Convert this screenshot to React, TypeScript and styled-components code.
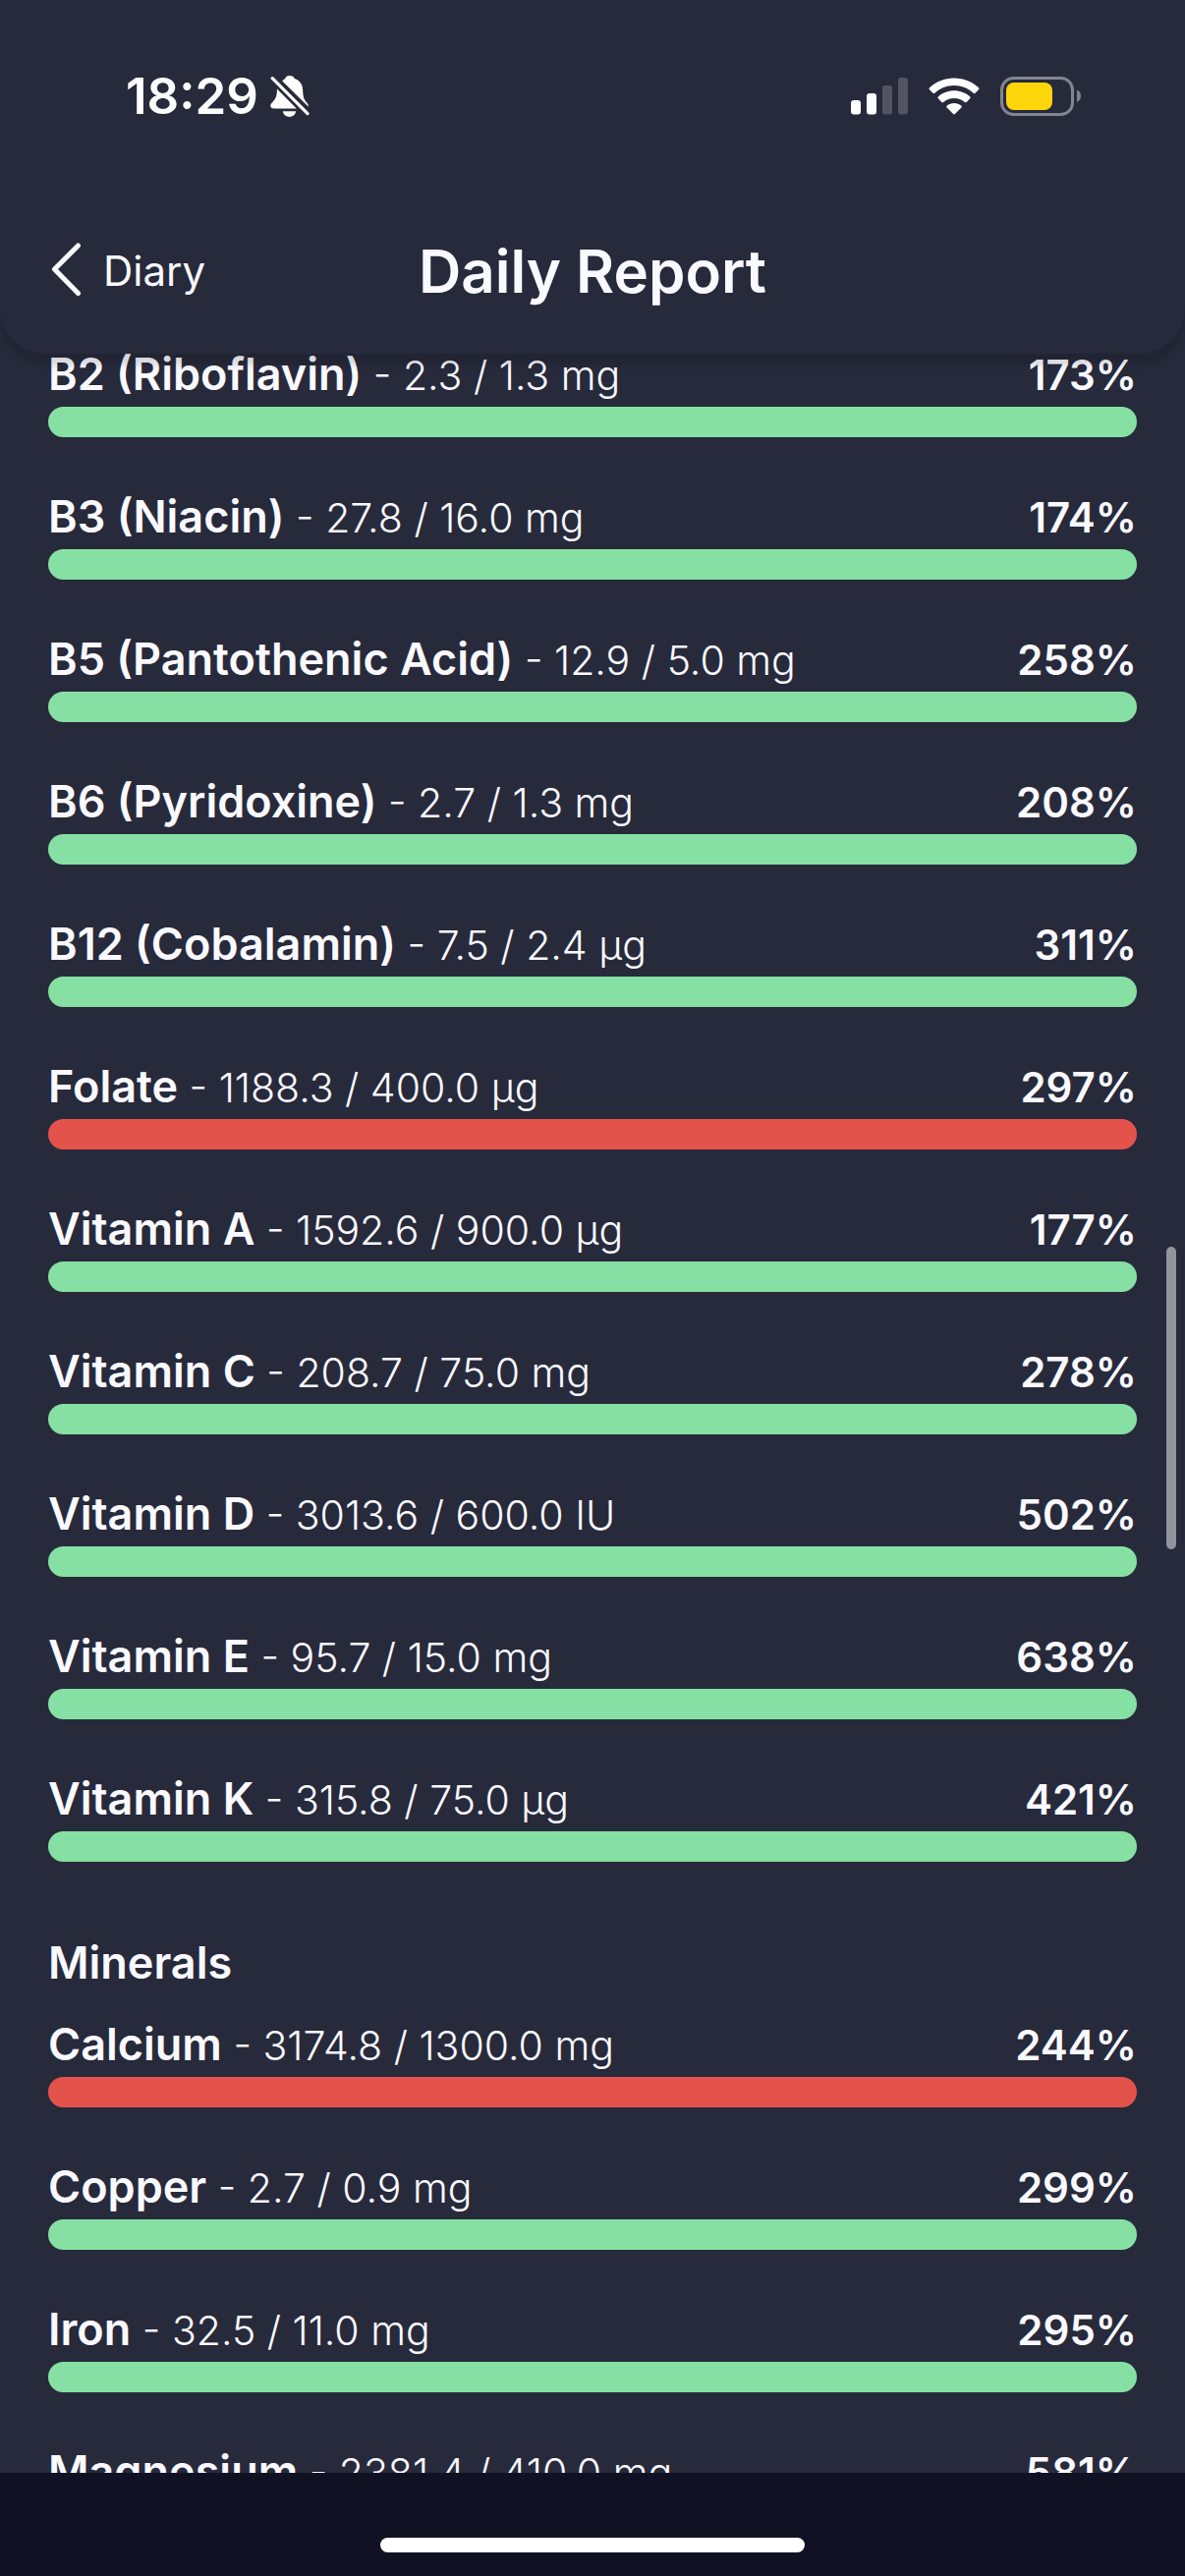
import React from "react";
import styled, { createGlobalStyle } from "styled-components";

const colors = {
  surface: "#272a3b",
  base: "#101122",
  text: "#f9f9ff",
  green: "#86e0a3",
  red: "#e4534b",
};

const GlobalStyle = createGlobalStyle`
  *, *::before, *::after { box-sizing: border-box; }
  body {
    margin: 0;
    background: ${colors.base};
    color: ${colors.text};
    font-family: Inter, "Liberation Sans", sans-serif;
  }
`;

const Screen = styled.div`
  display: flex;
  flex-direction: column;
  height: 100vh;
  overflow: hidden;
  background: ${colors.surface};
`;

const Header = styled.header`
  position: relative;
  z-index: 1;
  flex: none;
  background: ${colors.surface};
  border-radius: 0 0 46px 46px;
  box-shadow: 0 12px 6px rgba(0, 0, 0, 0.13);
`;

const StatusBar = styled.div`
  display: flex;
  align-items: center;
  justify-content: space-between;
  height: 195px;
  padding: 0 105px 0 128px;
`;

const StatusGroup = styled.div<{ $gap: number }>`
  display: flex;
  align-items: center;
  gap: ${(p) => p.$gap}px;
`;

const Clock = styled.time`
  font-size: 51px;
  line-height: 60px;
  font-weight: 600;
  color: #fff;
`;

const Nav = styled.nav`
  display: grid;
  grid-template-columns: 1fr auto 1fr;
  align-items: center;
  height: 165px;
  padding: 0 49px 4px;
`;

const BackButton = styled.button`
  display: flex;
  align-items: center;
  gap: 20px;
  justify-self: start;
  padding: 0;
  border: 0;
  background: none;
  color: inherit;
  font: inherit;
  font-size: 42px;
  line-height: 60px;
  cursor: pointer;
`;

const Title = styled.h1`
  margin: 0;
  font-size: 60px;
  line-height: 60px;
  font-weight: 600;
`;

const Report = styled.main`
  flex: 1;
  min-height: 0;
  overflow: hidden;
  padding: 0 49px;
`;

const SectionTitle = styled.h2`
  margin: 82px 0 41px;
  font-size: 45px;
  line-height: 42px;
  font-weight: 600;
`;

const NutrientList = styled.ul`
  display: flex;
  flex-direction: column;
  gap: 60px;
  margin: 0;
  padding: 0;
  list-style: none;
`;

const Nutrient = styled.li`
  display: flex;
  flex-direction: column;
  gap: 12px;
`;

const NutrientLabel = styled.div`
  display: flex;
  align-items: baseline;
  justify-content: space-between;
  height: 42px;
  font-size: 41px;
  line-height: 42px;
  font-weight: 300;
  white-space: nowrap;
`;

const Name = styled.span`
  font-size: 45px;
  font-weight: 600;
`;

const Percent = styled.span`
  font-size: 42px;
  font-weight: 600;
`;

const Meter = styled.progress<{ $color: string }>`
  appearance: none;
  display: block;
  width: 100%;
  height: 31px;
  border: 0;
  border-radius: 16px;
  overflow: hidden;
  background: ${colors.base};

  &::-webkit-progress-bar {
    background: ${colors.base};
  }
  &::-webkit-progress-value {
    background: ${(p) => p.$color};
  }
`;

const ScrollThumb = styled.div`
  position: absolute;
  z-index: 2;
  top: 1269px;
  right: 9px;
  width: 10px;
  height: 308px;
  border-radius: 5px;
  background: #92949d;
`;

const HomeArea = styled.footer`
  display: flex;
  flex: none;
  justify-content: center;
  align-items: flex-end;
  height: 105px;
  padding-bottom: 24px;
  background: ${colors.base};
`;

const HomeIndicator = styled.div`
  width: 432px;
  height: 15px;
  border-radius: 8px;
  background: #fff;
`;

type Item = {
  name: string;
  amount: string;
  target: string;
  unit: string;
  percent: number;
  over?: boolean;
};

const vitamins: Item[] = [
  { name: "B2 (Riboflavin)", amount: "2.3", target: "1.3", unit: "mg", percent: 173 },
  { name: "B3 (Niacin)", amount: "27.8", target: "16.0", unit: "mg", percent: 174 },
  { name: "B5 (Pantothenic Acid)", amount: "12.9", target: "5.0", unit: "mg", percent: 258 },
  { name: "B6 (Pyridoxine)", amount: "2.7", target: "1.3", unit: "mg", percent: 208 },
  { name: "B12 (Cobalamin)", amount: "7.5", target: "2.4", unit: "µg", percent: 311 },
  { name: "Folate", amount: "1188.3", target: "400.0", unit: "µg", percent: 297, over: true },
  { name: "Vitamin A", amount: "1592.6", target: "900.0", unit: "µg", percent: 177 },
  { name: "Vitamin C", amount: "208.7", target: "75.0", unit: "mg", percent: 278 },
  { name: "Vitamin D", amount: "3013.6", target: "600.0", unit: "IU", percent: 502 },
  { name: "Vitamin E", amount: "95.7", target: "15.0", unit: "mg", percent: 638 },
  { name: "Vitamin K", amount: "315.8", target: "75.0", unit: "µg", percent: 421 },
];

const minerals: Item[] = [
  { name: "Calcium", amount: "3174.8", target: "1300.0", unit: "mg", percent: 244, over: true },
  { name: "Copper", amount: "2.7", target: "0.9", unit: "mg", percent: 299 },
  { name: "Iron", amount: "32.5", target: "11.0", unit: "mg", percent: 295 },
  { name: "Magnesium", amount: "2381.4", target: "410.0", unit: "mg", percent: 581 },
];

function Nutrients({ items }: { items: Item[] }) {
  return (
    <NutrientList>
      {items.map((n) => (
        <Nutrient key={n.name}>
          <NutrientLabel>
            <span>
              <Name>{n.name}</Name> - {n.amount} / {n.target} {n.unit}
            </span>
            <Percent>{n.percent}%</Percent>
          </NutrientLabel>
          <Meter
            aria-label={n.name}
            max={100}
            value={Math.min(n.percent, 100)}
            $color={n.over ? colors.red : colors.green}
          />
        </Nutrient>
      ))}
    </NutrientList>
  );
}

const BellOff = () => (
  <svg width="40" height="44" viewBox="0 0 40 44" aria-label="Silent mode">
    <path
      fill="#fff"
      d="M19.500 1C22.300 1 24 2.300 24.800 4C30.200 5.800 33 10 33.200 16C33.400 23 34.500 25.500 37.300 28.500C38.500 29.800 39 31 38.700 32.600L12.300 6.400C13.200 5.300 14.200 4.500 15.200 4C15.900 2.300 17.200 1 19.500 1Z"
    />
    <path
      fill="#fff"
      d="M7 14.500L26.800 34.600H4C1.500 34.600.3 33.300.3 31.600C.3 30 1.300 28.900 2.500 27.700C5.500 24.800 6.900 22 7 14.500Z"
    />
    <path fill="#fff" d="M12.800 37.300H26.200C25.400 40.900 22.900 43 19.500 43S13.600 40.900 12.800 37.300Z" />
    <path d="M2.200 3.700L38 39.700" stroke={colors.surface} strokeWidth="7" />
    <path d="M2.200 3.700L38 39.700" stroke="#fff" strokeWidth="3.200" strokeLinecap="round" />
  </svg>
);

const Signal = () => (
  <svg width="58" height="38" viewBox="0 0 58 38" fill="#fff" aria-label="Cellular signal">
    <rect x="0" y="23" width="10" height="14.500" rx="3" />
    <rect x="16" y="16" width="10" height="21.500" rx="3" />
    <rect x="32" y="8" width="10" height="29.500" rx="3" opacity=".2" />
    <rect x="48" y="0" width="10" height="37.500" rx="3" opacity=".2" />
  </svg>
);

const Wifi = () => (
  <svg width="52" height="38" viewBox="0 0 52 38" fill="#fff" aria-label="Wi-Fi">
    <path d="M26 .5C35.800 .5 44.800 4.300 51 10.300C51.600 10.900 51.600 11.600 51 12.200L47.500 15.700C46.900 16.300 46.200 16.300 45.600 15.700C40.500 10.900 33.600 8 26 8S11.500 10.900 6.400 15.700C5.800 16.300 5.100 16.300 4.500 15.700L1 12.200C.4 11.600.4 10.900 1 10.300C7.200 4.300 16.200.5 26 .5Z" />
    <path d="M26 13.300C32.200 13.300 37.900 15.600 42.200 19.400C42.800 20 42.800 20.700 42.200 21.300L38.600 24.900C38.100 25.400 37.400 25.400 36.800 24.900C33.900 22.400 30.100 20.900 26 20.900S18.100 22.400 15.200 24.900C14.600 25.400 13.900 25.400 13.400 24.900L9.800 21.300C9.200 20.700 9.200 20 9.800 19.400C14.100 15.600 19.800 13.300 26 13.300Z" />
    <path d="M26 26C28.800 26 31.300 27 33.300 28.600C33.900 29.100 33.900 29.800 33.400 30.400L26.900 37C26.300 37.600 25.700 37.600 25.100 37L18.600 30.400C18.100 29.800 18.100 29.100 18.700 28.600C20.700 27 23.200 26 26 26Z" />
  </svg>
);

const Battery = () => (
  <svg width="83" height="40" viewBox="0 0 83 40" aria-label="Battery">
    <rect x="1.500" y="1.500" width="72" height="37" rx="12" fill="none" stroke="#82848f" strokeWidth="3" />
    <rect x="6" y="6" width="47" height="28" rx="8" fill="#ffd60a" />
    <path d="M78 13.500C80.500 14.700 82 17 82 19.700S80.500 24.700 78 25.900Z" fill="#82848f" />
  </svg>
);

const Chevron = () => (
  <svg width="36" height="60" viewBox="0 0 36 60" fill="none" aria-hidden="true">
    <path d="M30.500 4L6.500 28L30.500 52.500" stroke={colors.text} strokeWidth="5" strokeLinecap="round" strokeLinejoin="round" />
  </svg>
);

export default function App() {
  return (
    <>
      <GlobalStyle />
      <Screen>
        <Header>
          <StatusBar>
            <StatusGroup $gap={12}>
              <Clock>18:29</Clock>
              <BellOff />
            </StatusGroup>
            <StatusGroup $gap={21}>
              <Signal />
              <Wifi />
              <Battery />
            </StatusGroup>
          </StatusBar>
          <Nav>
            <BackButton type="button">
              <Chevron />
              Diary
            </BackButton>
            <Title>Daily Report</Title>
          </Nav>
        </Header>
        <Report>
          <Nutrients items={vitamins} />
          <SectionTitle>Minerals</SectionTitle>
          <Nutrients items={minerals} />
        </Report>
        <HomeArea>
          <HomeIndicator />
        </HomeArea>
        <ScrollThumb />
      </Screen>
    </>
  );
}
